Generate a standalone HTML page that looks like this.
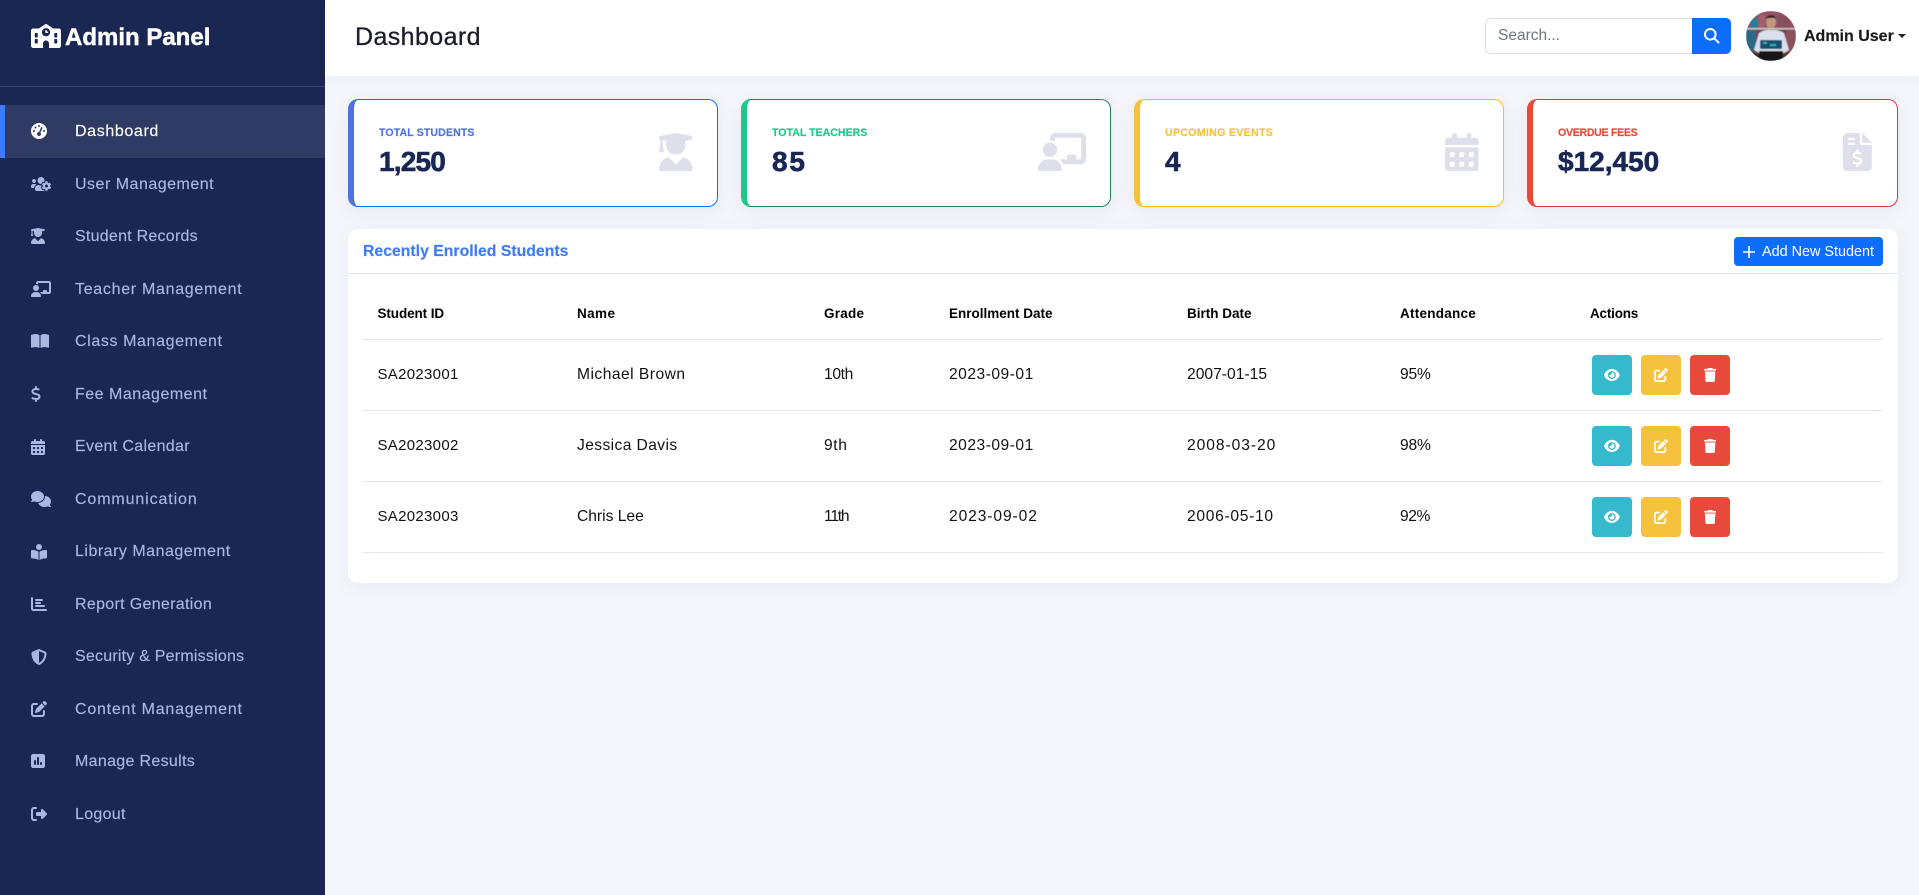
<!DOCTYPE html>
<html lang="en"><head><meta charset="utf-8"><title>Admin Panel</title>
<style>
*{box-sizing:border-box;margin:0;padding:0}
html,body{width:1919px;height:895px;overflow:hidden;background:#f4f6fb;font-family:"Liberation Sans",Arial,sans-serif;color:#111}
.a{position:absolute}
.t{position:absolute;white-space:nowrap;line-height:20px}
.nav{font-size:16px;letter-spacing:.5px;color:#aab7de;left:75px;-webkit-text-stroke:.15px #aab7de}
svg{position:absolute;display:block}
.ni{left:31px;height:16px;fill:#aab7de}
.card{position:absolute;top:99px;height:108px;width:371px;background:#fff;border:1px solid;border-left-width:6px;border-radius:10px;box-shadow:0 4px 20px rgba(30,40,90,.06)}
.lb{font-size:10.6px;font-weight:700;top:123px;-webkit-text-stroke:.15px}
.val{font-size:28px;font-weight:700;color:#1a2753;top:152px;-webkit-text-stroke:.6px #1a2753}
.ci{top:133px;height:38.4px;fill:#dddfeb}
.th{font-size:13.5px;font-weight:700;color:#000;top:303.5px}
.td{font-size:15.6px;color:#111;letter-spacing:.25px}
.ln{position:absolute;left:363px;width:1520px;height:1px;background:#e3e6f0}
.b{position:absolute;width:40px;height:40px;border-radius:4px}
.b svg{fill:#fff;height:14px;top:12.5px}
</style></head><body>
<svg width="0" height="0" style="position:absolute">
<symbol id="eye" viewBox="0 0 576 512"><path d="M288 32c-80.8 0-145.5 36.8-192.6 80.6C48.6 156 17.3 208 2.5 243.7c-3.3 7.9-3.3 16.7 0 24.6C17.3 304 48.6 356 95.4 399.4C142.5 443.2 207.2 480 288 480s145.5-36.8 192.6-80.6c46.8-43.5 78.1-95.4 93-131.1c3.3-7.9 3.3-16.7 0-24.6c-14.9-35.7-46.2-87.7-93-131.1C433.5 68.8 368.8 32 288 32zM144 256a144 144 0 1 1 288 0 144 144 0 1 1 -288 0zm144-64c0 35.3-28.7 64-64 64c-7.1 0-13.9-1.2-20.3-3.3c-5.5-1.8-11.9 1.6-11.7 7.4c.3 6.9 1.3 13.8 3.2 20.7c13.7 51.2 66.4 81.6 117.6 67.9s81.6-66.4 67.9-117.6c-11.1-41.5-47.8-69.4-88.6-71.1c-5.8-.2-9.2 6.1-7.4 11.7c2.1 6.4 3.3 13.2 3.3 20.3z"/></symbol>
<symbol id="edit" viewBox="0 0 512 512"><path d="M471.6 21.7c-21.9-21.9-57.3-21.9-79.2 0L362.3 51.7l97.9 97.9 30.1-30.1c21.9-21.9 21.9-57.3 0-79.2L471.6 21.7zm-299.2 220c-6.1 6.1-10.8 13.6-13.5 21.9l-29.6 88.8c-2.9 8.6-.6 18.1 5.8 24.6s15.9 8.7 24.6 5.8l88.8-29.6c8.2-2.7 15.7-7.4 21.9-13.5L437.7 172.3 339.7 74.3 172.4 241.7zM96 64C43 64 0 107 0 160V416c0 53 43 96 96 96H352c53 0 96-43 96-96V320c0-17.7-14.3-32-32-32s-32 14.3-32 32v96c0 17.7-14.3 32-32 32H96c-17.7 0-32-14.3-32-32V160c0-17.7 14.3-32 32-32h96c17.7 0 32-14.3 32-32s-14.3-32-32-32H96z"/></symbol>
<symbol id="trash" viewBox="0 0 448 512"><path d="M135.2 17.7L128 32H32C14.3 32 0 46.3 0 64S14.3 96 32 96H416c17.7 0 32-14.3 32-32s-14.3-32-32-32H320l-7.2-14.3C307.4 6.8 296.3 0 284.2 0H163.8c-12.1 0-23.2 6.8-28.6 17.7zM416 128H32L53.2 467c1.6 25.3 22.6 45 47.9 45H346.9c25.3 0 46.3-19.7 47.9-45L416 128z"/></symbol>
</svg>

<!-- sidebar -->
<div class="a" style="left:0;top:0;width:325px;height:895px;background:#1a2753"></div>
<svg style="left:31px;top:24px;height:24px;width:30px;fill:#fff" viewBox="0 0 640 512"><path d="M337.8 5.4C327-1.8 313-1.8 302.2 5.4L166.3 96H48C21.5 96 0 117.5 0 144V464c0 26.5 21.5 48 48 48H256V416c0-35.3 28.7-64 64-64s64 28.7 64 64v96H592c26.5 0 48-21.5 48-48V144c0-26.5-21.5-48-48-48H473.7L337.8 5.4zM96 192h32c8.8 0 16 7.2 16 16v64c0 8.8-7.2 16-16 16H96c-8.8 0-16-7.2-16-16V208c0-8.8 7.2-16 16-16zm400 16c0-8.8 7.2-16 16-16h32c8.8 0 16 7.2 16 16v64c0 8.8-7.2 16-16 16H512c-8.8 0-16-7.2-16-16V208zM96 320h32c8.8 0 16 7.2 16 16v64c0 8.8-7.2 16-16 16H96c-8.8 0-16-7.2-16-16V336c0-8.8 7.2-16 16-16zm400 16c0-8.8 7.2-16 16-16h32c8.8 0 16 7.2 16 16v64c0 8.8-7.2 16-16 16H512c-8.8 0-16-7.2-16-16V336zM232 176a88 88 0 1 1 176 0 88 88 0 1 1 -176 0zm88-48c-8.8 0-16 7.2-16 16v32c0 8.8 7.2 16 16 16h32c8.8 0 16-7.2 16-16s-7.2-16-16-16H336V144c0-8.8-7.2-16-16-16z"/></svg>
<div class="t" style="left:65px;top:27.5px;font-size:24px;font-weight:700;color:#fff;-webkit-text-stroke:.5px #fff">Admin Panel</div>
<div class="a" style="left:0;top:86px;width:325px;height:1px;background:rgba(255,255,255,.12)"></div>
<div class="a" style="left:0;top:105px;width:325px;height:53px;background:#2f3b63;border-left:5px solid #3b7cfc"></div>

<svg class="ni" style="top:123px;width:16px;fill:#fff" viewBox="0 0 512 512"><path d="M0 256a256 256 0 1 1 512 0A256 256 0 1 1 0 256zM288 96a32 32 0 1 0 -64 0 32 32 0 1 0 64 0zM256 416c35.3 0 64-28.7 64-64c0-17.4-6.9-33.1-18.1-44.6L366 161.7c5.3-12.1-.2-26.3-12.3-31.6s-26.3 .2-31.6 12.3L257.9 288c-.6 0-1.3 0-1.9 0c-35.3 0-64 28.7-64 64s28.7 64 64 64zM176 144a32 32 0 1 0 -64 0 32 32 0 1 0 64 0zM96 288a32 32 0 1 0 0-64 32 32 0 1 0 0 64zm352-32a32 32 0 1 0 -64 0 32 32 0 1 0 64 0z"/></svg>
<div class="t nav" style="top:122px;color:#fff;-webkit-text-stroke:.15px #fff;letter-spacing:.63px">Dashboard</div>

<svg class="ni" style="top:176px;width:20px" viewBox="0 0 640 512"><path d="M610.5 341.3c2.6-14.1 2.6-28.5 0-42.6l25.8-14.9c3-1.7 4.3-5.2 3.3-8.5-6.7-21.6-18.2-41.2-33.2-57.4-2.3-2.5-6-3.1-9-1.4l-25.8 14.9c-10.9-9.3-23.4-16.5-36.9-21.3v-29.8c0-3.4-2.4-6.4-5.7-7.1-22.3-5-45-4.8-66.2 0-3.3.7-5.7 3.7-5.7 7.1v29.8c-13.5 4.8-26 12-36.9 21.3l-25.8-14.9c-2.9-1.7-6.7-1.1-9 1.4-15 16.2-26.5 35.8-33.2 57.4-1 3.3.4 6.8 3.3 8.5l25.8 14.9c-2.6 14.1-2.6 28.5 0 42.6l-25.8 14.9c-3 1.7-4.3 5.2-3.3 8.5 6.7 21.6 18.2 41.1 33.2 57.4 2.3 2.5 6 3.1 9 1.4l25.8-14.9c10.9 9.3 23.4 16.5 36.9 21.3v29.8c0 3.4 2.4 6.4 5.7 7.1 22.3 5 45 4.8 66.2 0 3.3-.7 5.7-3.7 5.7-7.1v-29.8c13.5-4.8 26-12 36.9-21.3l25.8 14.9c2.9 1.7 6.7 1.1 9-1.4 15-16.2 26.5-35.8 33.2-57.4 1-3.3-.4-6.8-3.3-8.5l-25.8-14.9zM496 368.5c-26.8 0-48.5-21.8-48.5-48.5s21.8-48.5 48.5-48.5 48.5 21.8 48.5 48.5-21.7 48.5-48.5 48.5zM96 224c35.3 0 64-28.7 64-64s-28.7-64-64-64-64 28.7-64 64 28.7 64 64 64zm224 32c1.9 0 3.7-.5 5.6-.6 8.3-21.7 20.5-42.1 36.3-59.2 7.4-8 17.9-12.6 28.9-12.6 6.9 0 13.7 1.8 19.6 5.3l7.9 4.6c.8-.5 1.6-.9 2.4-1.4 7-14.6 11.2-30.8 11.2-48 0-61.9-50.1-112-112-112S208 82.1 208 144c0 61.9 50.1 112 112 112zm105.2 194.5c-2.3-1.2-4.6-2.6-6.8-3.9-8.2 4.8-15.3 9.8-27.5 9.8-10.9 0-21.4-4.6-28.9-12.6-18.3-19.8-32.3-43.9-40.2-69.6-10.7-34.5 24.9-49.7 25.8-50.3-.1-2.6-.1-5.2 0-7.8l-7.9-4.6c-3.8-2.2-7-5-9.8-8.1-3.3.2-6.5.6-9.8.6-24.6 0-47.6-6-68.5-16h-8.3C179.6 288 128 339.6 128 403.2V432c0 26.5 21.5 48 48 48h255.4c-3.7-6-6.2-12.8-6.2-20.3v-9.2zM173.1 274.6C161.5 263.1 145.6 256 128 256H64c-35.3 0-64 28.7-64 64v32c0 17.7 14.3 32 32 32h65.9c6.3-47.4 34.9-87.3 75.2-109.4z"/></svg>
<div class="t nav" style="top:175px">User Management</div>

<svg class="ni" style="top:228px;width:14px" viewBox="0 0 448 512"><path d="M219.3 .5c3.1-.6 6.3-.6 9.4 0l200 40C439.9 42.7 448 52.6 448 64s-8.1 21.3-19.3 23.5L352 102.9V160c0 70.7-57.3 128-128 128s-128-57.3-128-128V102.9L48 93.3v65.1l15.7 78.4c.9 4.7-.3 9.6-3.3 13.3s-7.6 5.9-12.4 5.9H16c-4.8 0-9.3-2.1-12.4-5.9s-4.3-8.6-3.3-13.3L16 158.4V86.6C6.5 83.3 0 74.3 0 64C0 52.6 8.1 42.7 19.3 40.5l200-40zM111.9 327.7c10.5-3.4 21.8 .4 29.4 8.5l71 75.5c6.3 6.7 17 6.7 23.3 0l71-75.5c7.6-8.1 18.9-11.9 29.4-8.5C401 348.6 448 409.4 448 481.3c0 17-13.8 30.7-30.7 30.7H30.7C13.8 512 0 498.2 0 481.3c0-71.9 47-132.7 111.9-153.6z"/></svg>
<div class="t nav" style="top:227px;letter-spacing:.25px">Student Records</div>

<svg class="ni" style="top:281px;width:20px" viewBox="0 0 640 512"><path d="M160 64c0-35.3 28.7-64 64-64H576c35.3 0 64 28.7 64 64V352c0 35.3-28.7 64-64 64H336.8c-11.8-25.5-29.9-47.5-52.4-64H384V320c0-17.7 14.3-32 32-32h64c17.7 0 32 14.3 32 32v32h64V64L224 64v49.1C205.2 102.2 183.3 96 160 96V64zm0 64a96 96 0 1 1 0 192 96 96 0 1 1 0-192zM133.3 352h53.3C260.3 352 320 411.7 320 485.3c0 14.7-11.9 26.7-26.7 26.7H26.7C11.9 512 0 500.1 0 485.3C0 411.7 59.7 352 133.3 352z"/></svg>
<div class="t nav" style="top:280px;letter-spacing:.7px">Teacher Management</div>

<svg class="ni" style="top:333px;width:18px" viewBox="0 0 576 512"><path d="M249.6 471.5c10.8 3.8 22.4-4.1 22.4-15.5V78.6c0-4.2-1.6-8.4-5-11C247.4 52 202.4 32 144 32C93.5 32 46.3 45.3 18.1 56.1C6.8 60.5 0 71.7 0 83.8V454.1c0 11.9 12.8 20.2 24.1 16.5C55.6 460.1 105.5 448 144 448c33.9 0 79 14 105.6 23.5zm76.8 0C353 462 398.1 448 432 448c38.5 0 88.4 12.1 119.9 22.6c11.3 3.8 24.1-4.6 24.1-16.5V83.8c0-12.1-6.8-23.3-18.1-27.6C529.7 45.3 482.5 32 432 32c-58.4 0-103.4 20-123 35.6c-3.3 2.6-5 6.8-5 11V456c0 11.4 11.7 19.3 22.4 15.5z"/></svg>
<div class="t nav" style="top:332px;letter-spacing:.61px">Class Management</div>

<svg class="ni" style="top:386px;width:10px" viewBox="0 0 320 512"><path d="M160 0c17.7 0 32 14.3 32 32V67.7c1.6 .2 3.1 .4 4.7 .7c.4 .1 .7 .1 1.1 .2l48 8.8c17.4 3.2 28.9 19.9 25.7 37.2s-19.9 28.9-37.2 25.7l-47.5-8.7c-31.3-4.6-58.9-1.5-78.3 6.2s-27.2 18.3-29 28.1c-2 10.7-.5 16.7 1.2 20.4c1.8 3.9 5.5 8.3 12.8 13.2c16.3 10.7 41.3 17.7 73.7 26.3l2.9 .8c28.6 7.6 63.6 16.8 89.6 33.8c14.2 9.3 27.6 21.9 35.9 39.5c8.5 17.9 10.3 37.9 6.4 59.2c-6.9 38-33.1 63.4-65.6 76.7c-13.7 5.6-28.6 9.2-44.4 11V480c0 17.7-14.3 32-32 32s-32-14.3-32-32V445.1c-.4-.1-.9-.1-1.3-.2l-.2 0 0 0c-24.4-3.8-64.5-14.3-91.5-26.3c-16.1-7.2-23.4-26.1-16.2-42.2s26.1-23.4 42.2-16.2c20.9 9.3 55.3 18.5 75.2 21.6c31.9 4.7 58.2 2 76-5.3c16.9-6.9 24.6-16.9 26.8-28.9c1.9-10.6 .4-16.7-1.3-20.4c-1.9-4-5.6-8.4-13-13.3c-16.4-10.7-41.5-17.7-74-26.3l-2.8-.7 0 0C119.4 279.3 84.4 270 58.4 253c-14.2-9.3-27.5-22-35.8-39.6c-8.4-17.9-10.1-37.9-6.1-59.2C23.7 116 52.3 91.2 85.1 78.6c13.4-5.2 28-8.5 42.9-10.4V32c0-17.7 14.3-32 32-32z"/></svg>
<div class="t nav" style="top:385px">Fee Management</div>

<svg class="ni" style="top:439px;width:14px" viewBox="0 0 448 512"><path d="M128 0c17.7 0 32 14.3 32 32V64H288V32c0-17.7 14.3-32 32-32s32 14.3 32 32V64h48c26.5 0 48 21.5 48 48v48H0V112C0 85.5 21.5 64 48 64H96V32c0-17.7 14.3-32 32-32zM0 192H448V464c0 26.5-21.5 48-48 48H48c-26.5 0-48-21.5-48-48V192zm64 80v32c0 8.8 7.2 16 16 16h32c8.8 0 16-7.2 16-16V272c0-8.8-7.2-16-16-16H80c-8.8 0-16 7.2-16 16zm128 0v32c0 8.8 7.2 16 16 16h32c8.8 0 16-7.2 16-16V272c0-8.8-7.2-16-16-16H208c-8.8 0-16 7.2-16 16zm144-16c-8.8 0-16 7.2-16 16v32c0 8.8 7.2 16 16 16h32c8.8 0 16-7.2 16-16V272c0-8.8-7.2-16-16-16H336zM64 400v32c0 8.8 7.2 16 16 16h32c8.8 0 16-7.2 16-16V400c0-8.8-7.2-16-16-16H80c-8.8 0-16 7.2-16 16zm144-16c-8.8 0-16 7.2-16 16v32c0 8.8 7.2 16 16 16h32c8.8 0 16-7.2 16-16V400c0-8.8-7.2-16-16-16H208zm112 16v32c0 8.8 7.2 16 16 16h32c8.8 0 16-7.2 16-16V400c0-8.8-7.2-16-16-16H336c-8.8 0-16 7.2-16 16z"/></svg>
<div class="t nav" style="top:437px;letter-spacing:.33px">Event Calendar</div>

<svg class="ni" style="top:491px;width:20px" viewBox="0 0 640 512"><path d="M208 352c114.9 0 208-78.8 208-176S322.9 0 208 0S0 78.8 0 176c0 38.6 14.7 74.3 39.6 103.4c-3.5 9.4-8.7 17.7-14.2 24.7c-4.8 6.2-9.7 11-13.3 14.3c-1.8 1.6-3.3 2.9-4.3 3.7c-.5 .4-.9 .7-1.1 .8l-.2 .2 0 0 0 0C1 327.2-1.4 334.4 .8 340.9S9.1 352 16 352c21.8 0 43.8-5.6 62.1-12.5c9.2-3.5 17.8-7.4 25.3-11.4C134.1 343.3 169.8 352 208 352zM448 176c0 112.3-99.1 196.9-216.5 207C255.8 457.4 336.4 512 432 512c38.2 0 73.9-8.7 104.7-23.9c7.5 4 16 7.9 25.2 11.4c18.3 6.9 40.3 12.5 62.1 12.5c6.9 0 13.1-4.5 15.2-11.1c2.1-6.6-.2-13.8-5.8-17.9l0 0 0 0-.2-.2c-.2-.2-.6-.4-1.1-.8c-1-.8-2.5-2-4.3-3.7c-3.6-3.3-8.5-8.1-13.3-14.3c-5.5-7-10.7-15.4-14.2-24.7c24.9-29 39.6-64.7 39.6-103.4c0-92.8-84.9-168.9-192.6-175.5c.4 5.1 .6 10.3 .6 15.5z"/></svg>
<div class="t nav" style="top:490px;letter-spacing:.88px">Communication</div>

<svg class="ni" style="top:544px;width:16px" viewBox="0 0 512 512"><path d="M160 96a96 96 0 1 1 192 0A96 96 0 1 1 160 96zm80 152V512l-48.4-24.2c-20.9-10.4-43.5-17-66.8-19.3l-96-9.6C12.5 457.2 0 443.5 0 427V224c0-17.7 14.3-32 32-32H62.3c63.6 0 125.6 19.6 177.7 56zm32 264V248c52.1-36.4 114.1-56 177.7-56H480c17.7 0 32 14.3 32 32V427c0 16.5-12.5 30.2-28.8 31.8l-96 9.6c-23.2 2.3-45.9 8.9-66.8 19.3L272 512z"/></svg>
<div class="t nav" style="top:542px">Library Management</div>

<svg class="ni" style="top:596px;width:16px" viewBox="0 0 512 512"><path d="M32 32c17.7 0 32 14.3 32 32V400c0 8.8 7.2 16 16 16H480c17.7 0 32 14.3 32 32s-14.3 32-32 32H80c-44.2 0-80-35.8-80-80V64C0 46.3 14.3 32 32 32zm96 96c0-17.7 14.3-32 32-32l192 0c17.7 0 32 14.3 32 32s-14.3 32-32 32l-192 0c-17.7 0-32-14.3-32-32zm32 64H288c17.7 0 32 14.3 32 32s-14.3 32-32 32H160c-17.7 0-32-14.3-32-32s14.3-32 32-32zm0 96H416c17.7 0 32 14.3 32 32s-14.3 32-32 32H160c-17.7 0-32-14.3-32-32s14.3-32 32-32z"/></svg>
<div class="t nav" style="top:595px;letter-spacing:.32px">Report Generation</div>

<svg class="ni" style="top:649px;width:16px" viewBox="0 0 512 512"><path d="M256 0c4.6 0 9.2 1 13.4 2.9L457.7 82.8c22 9.3 38.4 31 38.3 57.2c-.5 99.2-41.3 280.7-213.6 363.2c-16.7 8-36.1 8-52.8 0C57.3 420.7 16.5 239.2 16 140c-.1-26.2 16.3-47.9 38.3-57.2L242.7 2.9C246.8 1 251.4 0 256 0zm0 66.8V444.8C394 378 431.1 230.1 432 141.4L256 66.8l0 0z"/></svg>
<div class="t nav" style="top:647px;letter-spacing:.22px">Security &amp; Permissions</div>

<svg class="ni" style="top:701px;width:16px" viewBox="0 0 512 512"><use href="#edit"/></svg>
<div class="t nav" style="top:700px;letter-spacing:.77px">Content Management</div>

<svg class="ni" style="top:753px;width:14px" viewBox="0 0 448 512"><path d="M64 32C28.7 32 0 60.7 0 96V416c0 35.3 28.7 64 64 64H384c35.3 0 64-28.7 64-64V96c0-35.3-28.7-64-64-64H64zm64 192c17.7 0 32 14.3 32 32v96c0 17.7-14.3 32-32 32s-32-14.3-32-32V256c0-17.7 14.3-32 32-32zm64-64c0-17.7 14.3-32 32-32s32 14.3 32 32V352c0 17.7-14.3 32-32 32s-32-14.3-32-32V160zM320 288c17.7 0 32 14.3 32 32v32c0 17.7-14.3 32-32 32s-32-14.3-32-32V320c0-17.7 14.3-32 32-32z"/></svg>
<div class="t nav" style="top:752px;letter-spacing:.32px">Manage Results</div>

<svg class="ni" style="top:806px;width:16px" viewBox="0 0 512 512"><path d="M377.9 105.9L500.7 228.7c7.2 7.2 11.3 17.1 11.3 27.3s-4.1 20.1-11.3 27.3L377.9 406.1c-6.4 6.4-15 9.9-24 9.9c-18.7 0-33.9-15.2-33.9-33.9l0-62.1-128 0c-17.7 0-32-14.3-32-32l0-64c0-17.7 14.3-32 32-32l128 0 0-62.1c0-18.7 15.2-33.9 33.9-33.9c9 0 17.6 3.6 24 9.9zM160 96L96 96c-17.7 0-32 14.3-32 32l0 256c0 17.7 14.3 32 32 32l64 0c17.7 0 32 14.3 32 32s-14.3 32-32 32l-64 0c-53 0-96-43-96-96L0 128C0 75 43 32 96 32l64 0c17.7 0 32 14.3 32 32s-14.3 32-32 32z"/></svg>
<div class="t nav" style="top:805px;letter-spacing:.3px">Logout</div>

<!-- header -->
<div class="a" style="left:325px;top:0;width:1594px;height:76px;background:#fff;box-shadow:0 2px 10px rgba(30,40,90,.04)"></div>
<div class="t" style="left:355px;top:26.5px;font-size:25px;color:#1a1d2b;letter-spacing:.4px;-webkit-text-stroke:.3px #1a1d2b">Dashboard</div>
<div class="a" style="left:1485px;top:18px;width:208px;height:36px;border:1px solid #dee2e6;border-right:0;border-radius:5px 0 0 5px;background:#fff"></div>
<div class="t" style="left:1498px;top:26px;font-size:15.5px;color:#6c757d">Search...</div>
<div class="a" style="left:1692px;top:18px;width:39px;height:36px;background:#0d6efd;border-radius:0 5px 5px 0"></div>
<svg style="left:1704px;top:28px;width:15.5px;height:15.5px;fill:#fff" viewBox="0 0 512 512"><path d="M416 208c0 45.9-14.9 88.3-40 122.7L502.6 457.4c12.5 12.5 12.5 32.8 0 45.3s-32.8 12.5-45.3 0L330.7 376c-34.4 25.2-76.8 40-122.7 40C93.1 416 0 322.9 0 208S93.1 0 208 0S416 93.1 416 208zM208 352a144 144 0 1 0 0-288 144 144 0 1 0 0 288z"/></svg>
<svg style="left:1746px;top:11px;width:50px;height:50px" viewBox="0 0 50 50">
<defs><clipPath id="c"><circle cx="25" cy="25" r="25"/></clipPath><filter id="bl"><feGaussianBlur stdDeviation=".5"/></filter></defs>
<g clip-path="url(#c)"><g filter="url(#bl)">
<rect width="50" height="50" fill="#6f4555"/>
<rect x="0" y="0" width="50" height="17" fill="#8f5566"/>
<rect x="4" y="7" width="8" height="10" fill="#2a7d96"/>
<rect x="13" y="4" width="6" height="13" fill="#a5606e"/>
<rect x="32" y="4" width="12" height="13" fill="#8a4f5c"/>
<rect x="0" y="17" width="50" height="1.6" fill="#cfc6c4"/>
<rect x="0" y="19" width="10" height="20" fill="#2c6a84"/>
<rect x="40" y="19" width="10" height="22" fill="#8c505c"/>
<path d="M8 39l5-17c3-2 6-3 9-3h6c3 0 7 1 10 3l5 17-5 3H13z" fill="#d9e0ec"/>
<ellipse cx="25" cy="11" rx="5" ry="6.5" fill="#c4977d"/>
<path d="M20 8c0-5 10-5 10 0l-2-1h-6z" fill="#2b2320"/>
<rect x="14" y="29" width="22" height="9" rx="1" fill="#124f73"/>
<path d="M17 32h4M24 34h6" stroke="#38b2a6" stroke-width="2"/>
<rect x="13" y="40" width="24" height="10" fill="#131318"/>
<rect x="0" y="42" width="13" height="8" fill="#3d2a30"/>
<rect x="37" y="42" width="13" height="8" fill="#55363d"/>
</g></g></svg>
<div class="t" style="left:1804px;top:26.5px;font-size:16px;font-weight:700;color:#1a1a1a;-webkit-text-stroke:.15px #1a1a1a">Admin User</div>
<div class="a" style="left:1897.5px;top:34px;width:0;height:0;border-left:4px solid transparent;border-right:4px solid transparent;border-top:4.5px solid #222"></div>

<!-- stat cards -->
<div class="card" style="left:348px;width:370px;border-color:#0d6efd;border-left-color:#4e73df"></div>
<div class="t lb" style="left:379px;color:#4e73df;letter-spacing:.1px">TOTAL STUDENTS</div>
<div class="t val" style="left:379px;letter-spacing:-.8px">1,250</div>
<svg class="ci" style="left:659px;width:33.6px" viewBox="0 0 448 512"><path d="M219.3 .5c3.1-.6 6.3-.6 9.4 0l200 40C439.9 42.7 448 52.6 448 64s-8.1 21.3-19.3 23.5L352 102.9V160c0 70.7-57.3 128-128 128s-128-57.3-128-128V102.9L48 93.3v65.1l15.7 78.4c.9 4.7-.3 9.6-3.3 13.3s-7.6 5.9-12.4 5.9H16c-4.8 0-9.3-2.1-12.4-5.9s-4.3-8.6-3.3-13.3L16 158.4V86.6C6.5 83.3 0 74.3 0 64C0 52.6 8.1 42.7 19.3 40.5l200-40zM111.9 327.7c10.5-3.4 21.8 .4 29.4 8.5l71 75.5c6.3 6.7 17 6.7 23.3 0l71-75.5c7.6-8.1 18.9-11.9 29.4-8.5C401 348.6 448 409.4 448 481.3c0 17-13.8 30.7-30.7 30.7H30.7C13.8 512 0 498.2 0 481.3c0-71.9 47-132.7 111.9-153.6z"/></svg>

<div class="card" style="left:741px;width:370px;border-color:#198754;border-left-color:#1cc88a"></div>
<div class="t lb" style="left:772px;color:#1cc88a">TOTAL TEACHERS</div>
<div class="t val" style="left:772px;letter-spacing:1.8px">85</div>
<svg class="ci" style="left:1038px;width:48px" viewBox="0 0 640 512"><path d="M160 64c0-35.3 28.7-64 64-64H576c35.3 0 64 28.7 64 64V352c0 35.3-28.7 64-64 64H336.8c-11.8-25.5-29.9-47.5-52.4-64H384V320c0-17.7 14.3-32 32-32h64c17.7 0 32 14.3 32 32v32h64V64L224 64v49.1C205.2 102.2 183.3 96 160 96V64zm0 64a96 96 0 1 1 0 192 96 96 0 1 1 0-192zM133.3 352h53.3C260.3 352 320 411.7 320 485.3c0 14.7-11.9 26.7-26.7 26.7H26.7C11.9 512 0 500.1 0 485.3C0 411.7 59.7 352 133.3 352z"/></svg>

<div class="card" style="left:1134px;width:370px;border-color:#ffc107;border-left-color:#f6c23e"></div>
<div class="t lb" style="left:1165px;color:#f6c23e;letter-spacing:.3px">UPCOMING EVENTS</div>
<div class="t val" style="left:1165px">4</div>
<svg class="ci" style="left:1445.4px;width:33.6px" viewBox="0 0 448 512"><path d="M128 0c17.7 0 32 14.3 32 32V64H288V32c0-17.7 14.3-32 32-32s32 14.3 32 32V64h48c26.5 0 48 21.5 48 48v48H0V112C0 85.5 21.5 64 48 64H96V32c0-17.7 14.3-32 32-32zM0 192H448V464c0 26.5-21.5 48-48 48H48c-26.5 0-48-21.5-48-48V192zm64 80v32c0 8.8 7.2 16 16 16h32c8.8 0 16-7.2 16-16V272c0-8.8-7.2-16-16-16H80c-8.8 0-16 7.2-16 16zm128 0v32c0 8.8 7.2 16 16 16h32c8.8 0 16-7.2 16-16V272c0-8.8-7.2-16-16-16H208c-8.8 0-16 7.2-16 16zm144-16c-8.8 0-16 7.2-16 16v32c0 8.8 7.2 16 16 16h32c8.8 0 16-7.2 16-16V272c0-8.8-7.2-16-16-16H336zM64 400v32c0 8.8 7.2 16 16 16h32c8.8 0 16-7.2 16-16V400c0-8.8-7.2-16-16-16H80c-8.8 0-16 7.2-16 16zm144-16c-8.8 0-16 7.2-16 16v32c0 8.8 7.2 16 16 16h32c8.8 0 16-7.2 16-16V400c0-8.8-7.2-16-16-16H208zm112 16v32c0 8.8 7.2 16 16 16h32c8.8 0 16-7.2 16-16V400c0-8.8-7.2-16-16-16H336c-8.8 0-16 7.2-16 16z"/></svg>

<div class="card" style="left:1527px;border-color:#dc3545;border-left-color:#e74a3b"></div>
<div class="t lb" style="left:1558px;color:#e74a3b;letter-spacing:-.3px">OVERDUE FEES</div>
<div class="t val" style="left:1558px">$12,450</div>
<svg class="ci" style="left:1843.2px;width:28.8px" viewBox="0 0 384 512"><path d="M64 0C28.7 0 0 28.7 0 64V448c0 35.3 28.7 64 64 64H320c35.3 0 64-28.7 64-64V160H256c-17.7 0-32-14.3-32-32V0H64zM256 0V128H384L256 0zM64 80c0-8.8 7.2-16 16-16h64c8.8 0 16 7.2 16 16s-7.2 16-16 16H80c-8.8 0-16-7.2-16-16zm0 64c0-8.8 7.2-16 16-16h64c8.8 0 16 7.2 16 16s-7.2 16-16 16H80c-8.8 0-16-7.2-16-16zm128 72c8.8 0 16 7.2 16 16v17.3c8.5 1.2 16.7 3.1 24.1 5.1c8.5 2.3 13.6 11 11.3 19.6s-11 13.6-19.6 11.3c-11.1-3-22-5.2-32.1-5.3c-8.4-.1-17.4 1.8-23.6 5.5c-5.7 3.4-8.1 7.3-8.1 12.8c0 3.7 1.3 6.5 7.3 10.1c6.9 4.1 16.6 7.1 29.2 10.9l.5 .1 0 0 0 0c11.3 3.4 25.3 7.6 36.3 14.6c12.1 7.6 22.4 19.7 22.7 38.2c.3 19.3-9.6 33.3-22.9 41.6c-7.7 4.8-16.4 7.6-25.1 9.1V440c0 8.8-7.2 16-16 16s-16-7.2-16-16V422.2c-11.2-2.1-21.7-5.7-30.9-8.9l0 0 0 0c-2.1-.7-4.2-1.4-6.2-2.1c-8.4-2.8-12.9-11.9-10.1-20.2s11.9-12.9 20.2-10.1c2.5 .8 4.8 1.6 7.1 2.4l0 0 0 0 0 0c13.6 4.6 24.6 8.4 36.3 8.7c9.1 .3 17.9-1.7 23.7-5.3c5.1-3.2 7.9-7.3 7.8-14c-.1-4.6-1.8-7.8-7.7-11.6c-6.8-4.3-16.5-7.4-29-11.2l-1.6-.5 0 0c-11-3.3-24.3-7.3-34.8-13.7c-12-7.2-22.6-18.9-22.7-37.3c-.1-19.4 10.8-32.8 23.8-40.5c7.5-4.4 15.8-7.2 24.1-8.7V232c0-8.8 7.2-16 16-16z"/></svg>

<!-- table card -->
<div class="a" style="left:348px;top:229px;width:1550px;height:354px;background:#fff;border-radius:10px;box-shadow:0 4px 20px rgba(30,40,90,.05)"></div>
<div class="a" style="left:348px;top:273px;width:1550px;height:1px;background:#e3e6f0"></div>
<div class="t" style="left:363px;top:242px;font-size:15.8px;font-weight:700;color:#3f7bf4;-webkit-text-stroke:.15px #3f7bf4">Recently Enrolled Students</div>
<div class="a" style="left:1734px;top:237px;width:149px;height:29px;background:#0d6efd;border-radius:4px"></div>
<svg style="left:1743px;top:246px;width:12px;height:12px" viewBox="0 0 12 12"><path d="M6 .5v11M.5 6h11" stroke="#fff" stroke-width="1.6" stroke-linecap="round"/></svg>
<div class="t" style="left:1762px;top:242px;font-size:14.4px;color:#fff">Add New Student</div>

<div class="t th" style="left:377.5px;letter-spacing:-.1px">Student ID</div>
<div class="t th" style="left:577px;letter-spacing:.4px">Name</div>
<div class="t th" style="left:824px;letter-spacing:.25px">Grade</div>
<div class="t th" style="left:949px">Enrollment Date</div>
<div class="t th" style="left:1187px">Birth Date</div>
<div class="t th" style="left:1400px;letter-spacing:.25px">Attendance</div>
<div class="t th" style="left:1590px;letter-spacing:-.2px">Actions</div>
<div class="ln" style="top:339px"></div>

<div class="t td" style="left:377.5px;top:364.5px;font-size:15px;letter-spacing:.3px">SA2023001</div>
<div class="t td" style="left:577px;top:364.5px;letter-spacing:.48px">Michael Brown</div>
<div class="t td" style="left:824px;top:364.5px;letter-spacing:-.35px">10th</div>
<div class="t td" style="left:949px;top:364.5px;letter-spacing:.5px">2023-09-01</div>
<div class="t td" style="left:1187px;top:364.5px;letter-spacing:.03px">2007-01-15</div>
<div class="t td" style="left:1400px;top:364.5px;letter-spacing:-.15px">95%</div>
<div class="b" style="left:1592px;top:355px;background:#36b9cc"><svg style="left:12px;width:15.75px"><use href="#eye"/></svg></div>
<div class="b" style="left:1641px;top:355px;background:#f6c23e"><svg style="left:13px;width:14px"><use href="#edit"/></svg></div>
<div class="b" style="left:1690px;top:355px;background:#e74a3b"><svg style="left:14px;width:12.25px"><use href="#trash"/></svg></div>
<div class="ln" style="top:410px"></div>

<div class="t td" style="left:377.5px;top:435.5px;font-size:15px;letter-spacing:.3px">SA2023002</div>
<div class="t td" style="left:577px;top:435.5px;letter-spacing:.4px">Jessica Davis</div>
<div class="t td" style="left:824px;top:435.5px;letter-spacing:.6px">9th</div>
<div class="t td" style="left:949px;top:435.5px;letter-spacing:.5px">2023-09-01</div>
<div class="t td" style="left:1187px;top:435.5px;letter-spacing:.95px">2008-03-20</div>
<div class="t td" style="left:1400px;top:435.5px;letter-spacing:-.15px">98%</div>
<div class="b" style="left:1592px;top:426px;background:#36b9cc"><svg style="left:12px;width:15.75px"><use href="#eye"/></svg></div>
<div class="b" style="left:1641px;top:426px;background:#f6c23e"><svg style="left:13px;width:14px"><use href="#edit"/></svg></div>
<div class="b" style="left:1690px;top:426px;background:#e74a3b"><svg style="left:14px;width:12.25px"><use href="#trash"/></svg></div>
<div class="ln" style="top:481px"></div>

<div class="t td" style="left:377.5px;top:506.5px;font-size:15px;letter-spacing:.3px">SA2023003</div>
<div class="t td" style="left:577px;top:506.5px;letter-spacing:0">Chris Lee</div>
<div class="t td" style="left:824px;top:506.5px;letter-spacing:-1.2px">11th</div>
<div class="t td" style="left:949px;top:506.5px;letter-spacing:.9px">2023-09-02</div>
<div class="t td" style="left:1187px;top:506.5px;letter-spacing:.7px">2006-05-10</div>
<div class="t td" style="left:1400px;top:506.5px;letter-spacing:-.4px">92%</div>
<div class="b" style="left:1592px;top:497px;background:#36b9cc"><svg style="left:12px;width:15.75px"><use href="#eye"/></svg></div>
<div class="b" style="left:1641px;top:497px;background:#f6c23e"><svg style="left:13px;width:14px"><use href="#edit"/></svg></div>
<div class="b" style="left:1690px;top:497px;background:#e74a3b"><svg style="left:14px;width:12.25px"><use href="#trash"/></svg></div>
<div class="ln" style="top:552px"></div>
</body></html>
